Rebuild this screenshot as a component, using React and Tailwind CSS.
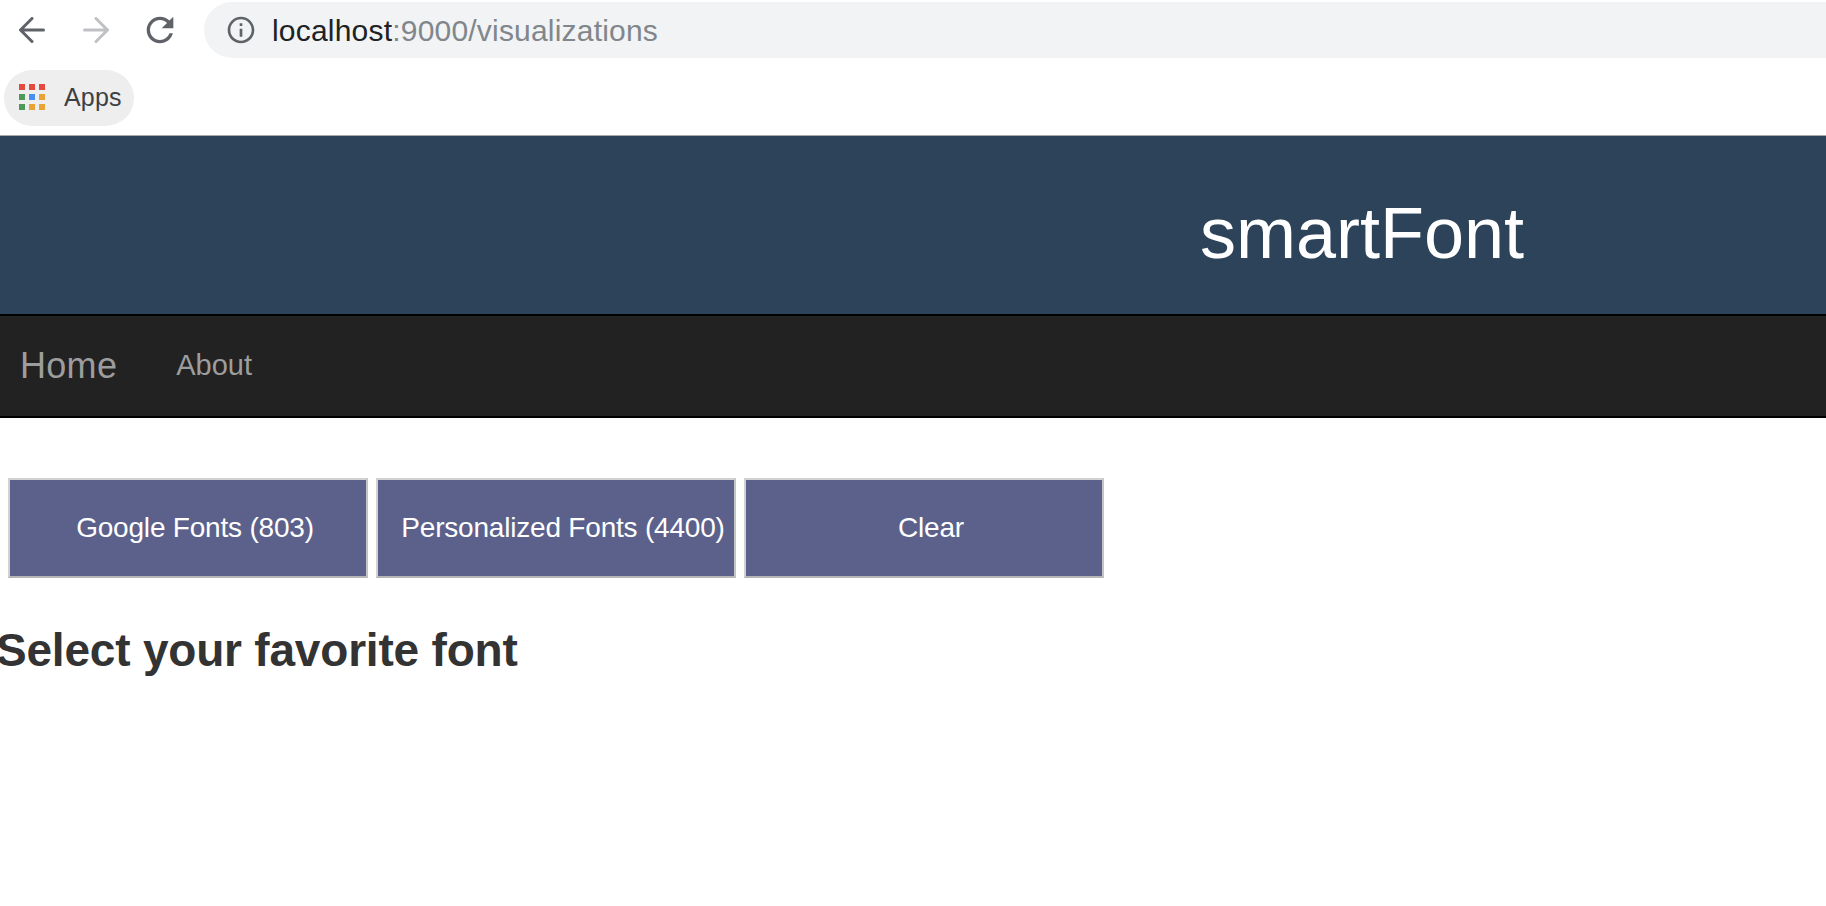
const sans = { fontFamily: '"Liberation Sans", Arial, sans-serif' };

function Icon({ d, className }) {
  return (
    <svg viewBox="0 0 24 24" className={className} fill="currentColor">
      <path d={d} />
    </svg>
  );
}

function Arrow({ d, className }) {
  return (
    <svg viewBox="0 0 26 26" className={className} fill="none" stroke="currentColor" strokeWidth="3" strokeLinecap="round" strokeLinejoin="round">
      <path d={d} />
    </svg>
  );
}

const RELOAD = "M17.65 6.35C16.2 4.9 14.21 4 12 4c-4.42 0-7.99 3.58-7.99 8s3.57 8 7.99 8c3.73 0 6.84-2.55 7.73-6h-2.08c-.82 2.33-3.04 4-5.65 4-3.31 0-6-2.69-6-6s2.69-6 6-6c1.66 0 3.14.69 4.22 1.78L13 11h7V4l-2.35 2.35z";
const INFO = "M11 7h2v2h-2zm0 4h2v6h-2zm1-9C6.48 2 2 6.48 2 12s4.48 10 10 10 10-4.48 10-10S17.52 2 12 2zm0 18c-4.41 0-8-3.59-8-8s3.59-8 8-8 8 3.59 8 8-3.59 8-8 8z";

function AppsGrid() {
  const cells = [
    "bg-[#e34b3f]", "bg-[#e34b3f]", "bg-[#e34b3f]",
    "bg-[#4f9a5b]", "bg-[#4a8fef]", "bg-[#e7a238]",
    "bg-[#4f9a5b]", "bg-[#e7a238]", "bg-[#e7a238]",
  ];
  return (
    <div className="-mt-[2px] grid grid-cols-[6px_6px_6px] gap-[4px]">
      {cells.map((c, i) => (
        <span key={i} className={`block h-[6px] w-[6px] ${c}`} />
      ))}
    </div>
  );
}

function FontButton({ children }) {
  return (
    <button className="flex h-[100px] w-[360px] items-center justify-center border-2 border-t-[#d2d2d2] border-l-[#d2d2d2] border-r-[#c4c4c4] border-b-[#b6b6b6] bg-[#5c618c] pl-[14px] text-[28px] tracking-[-0.2px] text-white">
      {children}
    </button>
  );
}

export default function App() {
  return (
    <div className="h-[906px] w-full overflow-hidden bg-white" style={sans}>
      <div className="flex h-[68px] items-start pt-[2px]">
        <div className="flex h-[56px] w-[204px] shrink-0 items-center pl-[19px]">
          <Arrow d="M24.5 13H1.5M13 1.5 1.5 13 13 24.5" className="h-[26px] w-[26px] text-[#5f6368]" />
          <Arrow d="M1.5 13h23M13 1.5 24.5 13 13 24.5" className="ml-[38px] h-[26px] w-[26px] text-[#bfc1c4]" />
          <Icon d={RELOAD} className="ml-[31px] h-[40px] w-[40px] text-[#5f6368]" />
        </div>
        <div className="flex h-[56px] flex-1 items-center rounded-l-[28px] bg-[#f1f3f4] pl-[21px]">
          <Icon d={INFO} className="h-[32px] w-[32px] text-[#5f6368]" />
          <span className="ml-[15px] text-[30px] tracking-[0.2px] text-[#202124]">
            localhost<span className="text-[#80868b]">:9000/visualizations</span>
          </span>
        </div>
      </div>
      <div className="flex h-[67px] items-start pl-[4px] pt-[2px]">
        <div className="flex h-[56px] w-[130px] items-center rounded-[28px] bg-[#eeeeee] pl-[15px]">
          <AppsGrid />
          <span className="ml-[19px] text-[25px] tracking-[0.2px] text-[#3c4043]">Apps</span>
        </div>
      </div>
      <header className="flex h-[179px] items-center border-t border-[#a8a9aa] bg-[#2c435a] pl-[1200px] pt-[15px]">
        <h1 className="text-[72px] leading-none text-white">smartFont</h1>
      </header>
      <nav className="flex h-[104px] items-center border-y-2 border-black bg-[#222222] pl-[20px] text-[#9d9d9d]">
        <span className="text-[36px] tracking-[0.3px]">Home</span>
        <span className="ml-[59px] text-[29px]">About</span>
      </nav>
      <div className="mt-[60px] flex gap-[8px] pl-[8px]">
        <FontButton>Google Fonts (803)</FontButton>
        <FontButton>Personalized Fonts (4400)</FontButton>
        <FontButton>Clear</FontButton>
      </div>
      <h2 className="ml-[-4px] mt-[44px] text-[46px] font-bold leading-[56px] tracking-[-0.2px] text-[#333333]">
        Select your favorite font
      </h2>
    </div>
  );
}
